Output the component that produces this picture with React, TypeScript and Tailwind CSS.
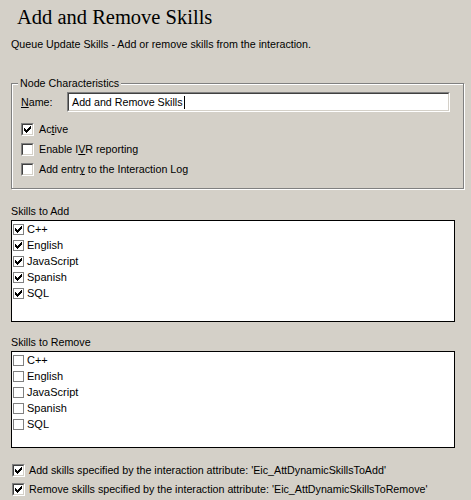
import React from "react";

const skills = ["C++", "English", "JavaScript", "Spanish", "SQL"];

function Check() {
  return (
    <svg width="7" height="7" viewBox="0 0 7 7" shapeRendering="crispEdges">
      <path d="M0 2h1v3H0zM1 3h1v3H1zM2 4h1v3H2zM3 3h1v3H3zM4 2h1v3H4zM5 1h1v3H5zM6 0h1v3H6z" fill="#000" />
    </svg>
  );
}

function Box3D({ checked }: { checked?: boolean }) {
  return (
    <div className="w-[13px] h-[13px] shrink-0 border border-t-[#808080] border-l-[#808080] border-b-white border-r-white">
      <div className="w-full h-full border border-t-[#404040] border-l-[#404040] border-b-[#d4d0c8] border-r-[#d4d0c8] bg-white flex items-center justify-center">
        {checked && <Check />}
      </div>
    </div>
  );
}

function ListBox({ checked, height }: { checked: boolean; height: string }) {
  return (
    <div className={`mx-[11px] w-[444px] ${height} border border-black bg-white pl-px`}>
      {skills.map((s) => (
        <div key={s} className="flex items-center h-4 gap-[3px]">
          <div className="w-[11px] h-[11px] border border-[#808080] bg-white flex items-center justify-center">
            {checked && <Check />}
          </div>
          <span className="text-[11px] text-black leading-none">{s}</span>
        </div>
      ))}
    </div>
  );
}

export default function App() {
  return (
    <div
      className="w-[471px] h-[500px] bg-[#d4d0c8] text-black overflow-hidden text-[10.7px] whitespace-nowrap"
      style={{ fontFamily: '"Liberation Sans", Arial, sans-serif' }}
    >
      <div
        className="pl-[17px] pt-[5px] h-[33px] text-[20.5px] leading-[24px]"
        style={{ fontFamily: '"Liberation Serif", serif' }}
      >
        Add and Remove Skills
      </div>
      <div className="pl-[11px] h-[22px] leading-[22px]">
        Queue Update Skills - Add or remove skills from the interaction.
      </div>

      <div className="mt-[28px] mx-[11px] w-[453px] h-[106px] relative border border-[#808080] shadow-[inset_1px_1px_0_#fff,1px_1px_0_#fff]">
        <span className="absolute left-[6px] -top-[8px] px-[2px] bg-[#d4d0c8] leading-[14px]">
          Node Characteristics
        </span>
        <div className="pt-[8px] pl-[9px] pr-[13px] flex items-center">
          <span className="w-[46px]">
            <u>N</u>ame:
          </span>
          <div className="flex-1 h-[20px] border border-t-[#808080] border-l-[#808080] border-b-white border-r-white">
            <div className="h-full border border-t-[#404040] border-l-[#404040] border-b-[#d4d0c8] border-r-[#d4d0c8] bg-white flex items-center pl-[3px]">
              Add and Remove Skills<span className="w-px h-[13px] bg-black ml-px" />
            </div>
          </div>
        </div>
        <div className="pl-[9px] mt-[11px] flex flex-col gap-[7px]">
          <div className="flex items-center gap-[5px] h-[13px]">
            <Box3D checked />
            <span>
              Ac<u>t</u>ive
            </span>
          </div>
          <div className="flex items-center gap-[5px] h-[13px]">
            <Box3D />
            <span>
              Enable I<u>V</u>R reporting
            </span>
          </div>
          <div className="flex items-center gap-[5px] h-[13px]">
            <Box3D />
            <span>
              Add entr<u>y</u> to the Interaction Log
            </span>
          </div>
        </div>
      </div>

      <div className="mt-[13px] pl-[11px] h-[18px] leading-[18px]">Skills to Add</div>
      <ListBox checked height="h-[102px]" />

      <div className="mt-[11px] pl-[11px] h-[18px] leading-[18px]">Skills to Remove</div>
      <ListBox checked={false} height="h-[97px]" />

      <div className="mt-[16px] pl-[12px] flex flex-col gap-[6px]">
        <div className="flex items-center gap-[4px] h-[13px]">
          <Box3D checked />
          <span>Add skills specified by the interaction attribute: 'Eic_AttDynamicSkillsToAdd'</span>
        </div>
        <div className="flex items-center gap-[4px] h-[13px]">
          <Box3D checked />
          <span>Remove skills specified by the interaction attribute: 'Eic_AttDynamicSkillsToRemove'</span>
        </div>
      </div>
    </div>
  );
}
